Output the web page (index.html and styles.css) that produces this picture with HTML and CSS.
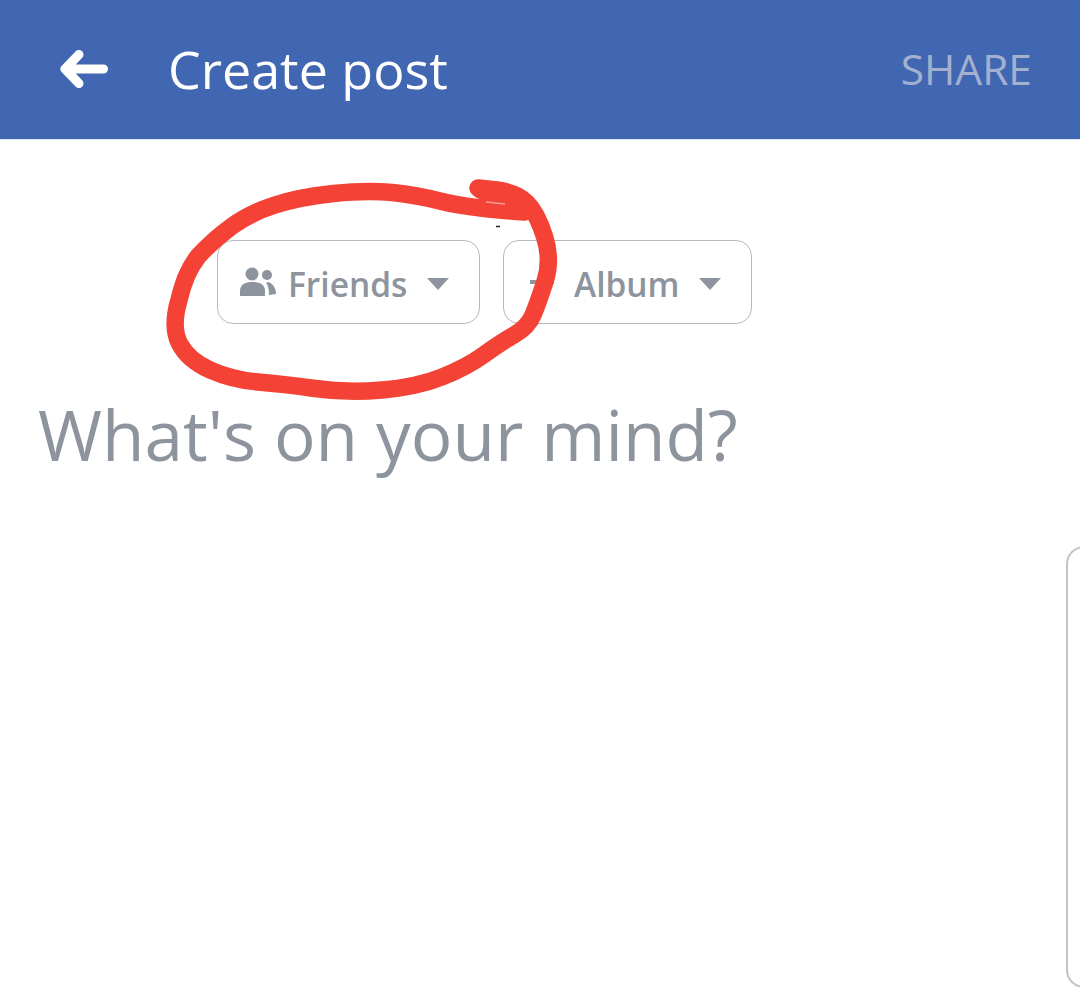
FILE: index.html
```html
<!DOCTYPE html>
<html lang="en">
<head>
    <meta charset="UTF-8">
    <meta name="viewport" content="width=device-width, initial-scale=1.0">
    <title>Create post</title>
    <link rel="stylesheet" href="styles.css">
</head>
<body>
    <header class="topbar">
        <svg class="back" width="50" height="42" viewBox="0 0 50 42">
            <path d="M44.500 20H7M20 5.500L6 20L20 34.500" fill="none" stroke="#fff" stroke-width="9" stroke-linecap="round" stroke-linejoin="round"/>
        </svg>
        <h1 class="title">Create post</h1>
        <span class="share">SHARE</span>
    </header>

    <main class="composer">
        <div class="chips">
            <div class="chip chip-friends">
                <svg class="chip-icon" width="36" height="30" viewBox="0 0 36 30">
                    <circle cx="12" cy="7" r="6.500" fill="#8d949e"/>
                    <circle cx="27" cy="8" r="5" fill="#8d949e"/>
                    <path d="M0 29V24C0 17 6 15 12 15C19 15 25 17 25 24V29Z" fill="#8d949e"/>
                    <path d="M28 15C32 16 36 20 36 27L29 28C29 22 28 18 26 16Z" fill="#8d949e"/>
                </svg>
                <span class="chip-label">Friends</span>
                <i class="caret"></i>
            </div>
            <div class="chip chip-album">
                <svg class="chip-icon" width="24" height="30" viewBox="0 0 24 30">
                    <path d="M0 15H24M12 3V27" fill="none" stroke="#8d949e" stroke-width="4"/>
                </svg>
                <span class="chip-label">Album</span>
                <i class="caret"></i>
            </div>
        </div>
        <p class="prompt">What's on your mind?</p>
    </main>

    <div class="side-panel"></div>

    <svg class="scribble" width="1080" height="1005" viewBox="0 0 1080 1005">
        <path d="M478 188L497 190Q517 193 527 203Q537 213 544.500 236.500Q552 260 545 281.500Q538 303 533 315Q528 327 514 335Q500 343 483.500 355Q467 367 442 377Q417 387 382 390Q347 393 315 388.500Q283 384 258 382Q233 380 210 370Q188 360 179.500 343.500Q171 327 179 300Q185 273 198 256.500Q213 240 231.500 226.500Q250 213 275 205Q300 197 333.500 193.500Q367 190 392 192.500Q417 195 442 201.500Q467 208 525 212" fill="none" stroke="#f44336" stroke-width="17.500" stroke-linecap="round" stroke-linejoin="round"/>
        <path d="M480 190L522 206" fill="none" stroke="#f44336" stroke-width="17" stroke-linecap="round"/>
        <path d="M486 202L505 204" fill="none" stroke="#fb9a8f" stroke-width="1.500"/>
        <path d="M496 226.500H500" fill="none" stroke="#222" stroke-width="1.500"/>
    </svg>
</body>
</html>
```

FILE: styles.css
```css
html, body { margin: 0; padding: 0; }
body { width: 1080px; height: 1005px; background: #fff; font-family: "Open Sans", "Noto Sans", sans-serif; position: relative; overflow: hidden; }

.topbar { height: 139px; background: #4267b2; display: flex; align-items: center; padding: 0 48px 0 59px; border-bottom: 1px solid #d8e6f5; }
.back { flex: none; }
.title { margin: 0 0 2px 59px; font-size: 52px; font-weight: 400; color: #fff; flex: 1; }
.share { font-size: 42.500px; color: #a3b1cf; margin-bottom: 3px; }

.composer { padding: 100px 0 0 38px; }
.chips { display: flex; gap: 23px; margin-left: 179px; }
.chip { height: 84px; box-sizing: border-box; border: 1.500px solid #b5b8bd; border-radius: 16px; display: flex; align-items: center; color: #8d949e; font-size: 33.500px; font-weight: 600; }
.chip-friends { width: 263px; padding-left: 22px; }
.chip-album { width: 249px; padding-left: 26px; }
.chip-icon { flex: none; margin-right: 12px; }
.chip-album .chip-icon { margin-right: 20px; }
.chip-label { margin-top: 3px; }
.caret { width: 0; height: 0; margin: 3px 0 0 19.500px; border-left: 11.500px solid transparent; border-right: 11.500px solid transparent; border-top: 12px solid #8d949e; }

.prompt { margin: 62px 0 0; font-size: 69.300px; line-height: 96px; color: #8d949e; }

.side-panel { position: absolute; left: 1066px; top: 546px; width: 40px; height: 442px; box-sizing: border-box; border: 2px solid #c4c4c4; border-radius: 18px; }
.scribble { position: absolute; left: 0; top: 0; pointer-events: none; }
```
